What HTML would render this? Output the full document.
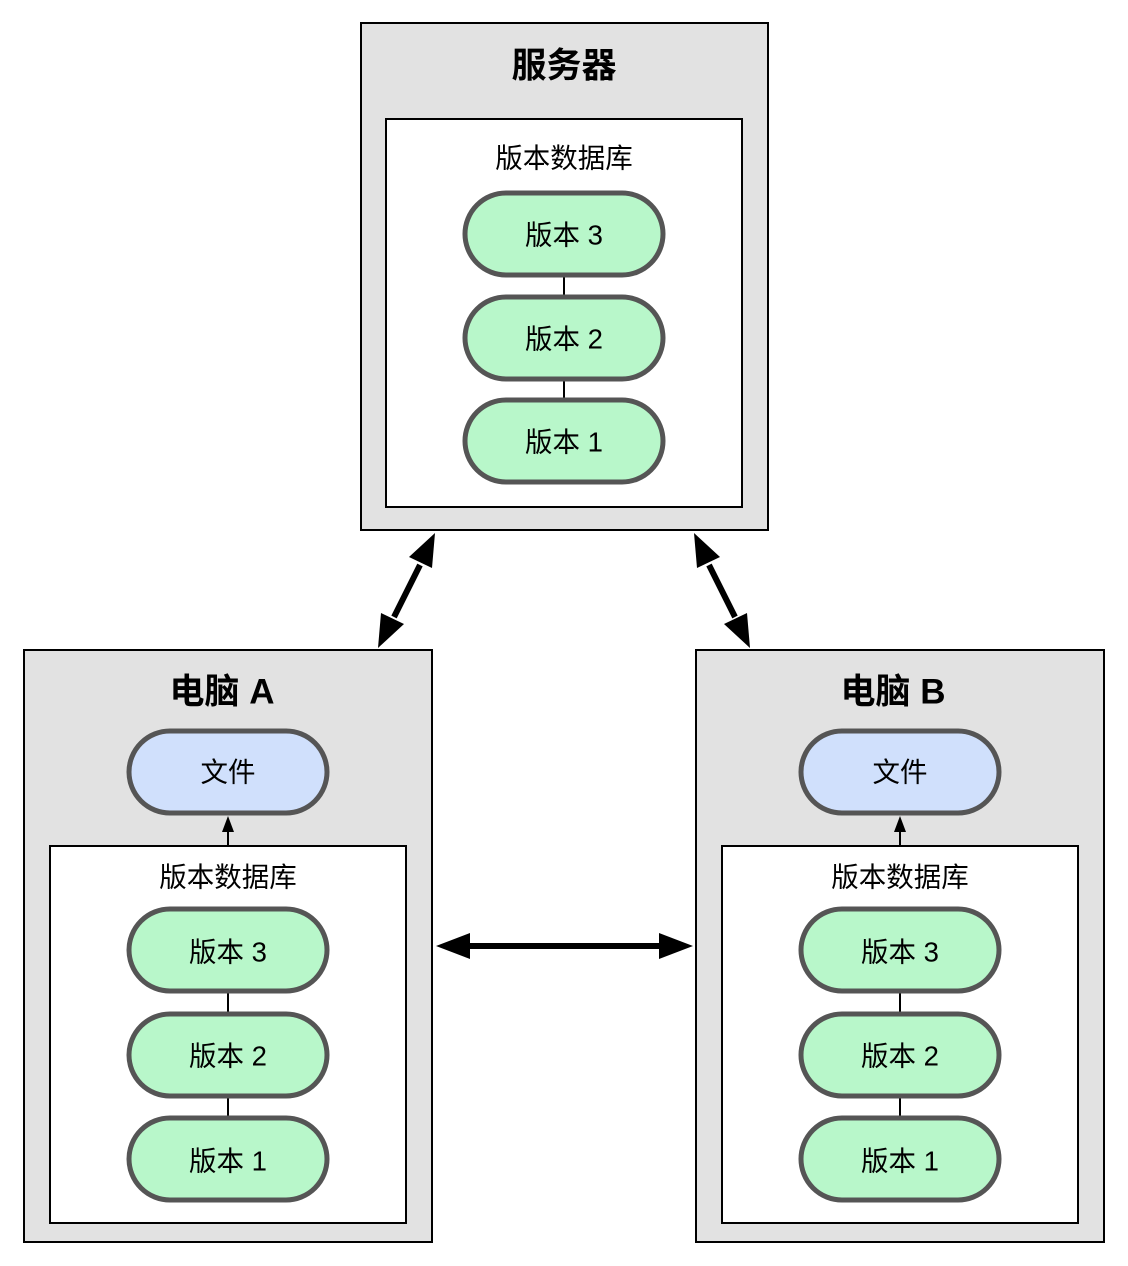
<!DOCTYPE html>
<html><head><meta charset="utf-8"><style>
html,body{margin:0;padding:0;background:#fff;}
svg{display:block;}
text{font-family:"Liberation Sans","Noto Sans CJK SC",sans-serif;fill:#000;text-anchor:middle;dominant-baseline:central;}
.t{font-size:35px;font-weight:bold;}
.s{font-size:27.5px;}
.box{fill:#e2e2e2;stroke:#000;stroke-width:2;}
.in{fill:#fff;stroke:#000;stroke-width:2;}
.g{fill:#b8f7ca;stroke:#555;stroke-width:5;}
.b{fill:#d0e0fc;stroke:#555;stroke-width:5;}
.ln{stroke:#000;stroke-width:2;}
.ar{stroke:#000;stroke-width:6;}
</style></head><body>
<svg width="1128" height="1266" viewBox="0 0 1128 1266" xmlns="http://www.w3.org/2000/svg">
<rect class="box" x="361" y="23" width="407" height="507"/>
<text class="t" x="564" y="66">服务器</text>
<rect class="in" x="386" y="119" width="356" height="388"/>
<text class="s" x="564" y="158">版本数据库</text>
<line class="ln" x1="564" y1="275" x2="564" y2="297"/>
<line class="ln" x1="564" y1="379" x2="564" y2="400"/>
<rect class="g" x="465" y="193" width="198" height="82" rx="41"/>
<text class="s" x="564" y="235">版本 3</text>
<rect class="g" x="465" y="297" width="198" height="82" rx="41"/>
<text class="s" x="564" y="339">版本 2</text>
<rect class="g" x="465" y="400" width="198" height="82" rx="41"/>
<text class="s" x="564" y="442">版本 1</text>

<rect class="box" x="24" y="650" width="408" height="592"/>
<text class="t" x="222" y="692">电脑 A</text>
<rect class="in" x="50" y="846" width="356" height="377"/>
<rect class="b" x="129" y="731" width="198" height="82" rx="41"/>
<text class="s" x="228" y="772">文件</text>
<line class="ln" x1="228" y1="846" x2="228" y2="830"/>
<polygon points="228,816 222,832 234,832" fill="#000"/>
<text class="s" x="228" y="877">版本数据库</text>
<line class="ln" x1="228" y1="991" x2="228" y2="1014"/>
<line class="ln" x1="228" y1="1096" x2="228" y2="1118"/>
<rect class="g" x="129" y="909" width="198" height="82" rx="41"/>
<text class="s" x="228" y="952">版本 3</text>
<rect class="g" x="129" y="1014" width="198" height="82" rx="41"/>
<text class="s" x="228" y="1056">版本 2</text>
<rect class="g" x="129" y="1118" width="198" height="82" rx="41"/>
<text class="s" x="228" y="1161">版本 1</text>

<rect class="box" x="696" y="650" width="408" height="592"/>
<text class="t" x="893" y="692">电脑 B</text>
<rect class="in" x="722" y="846" width="356" height="377"/>
<rect class="b" x="801" y="731" width="198" height="82" rx="41"/>
<text class="s" x="900" y="772">文件</text>
<line class="ln" x1="900" y1="846" x2="900" y2="830"/>
<polygon points="900,816 894,832 906,832" fill="#000"/>
<text class="s" x="900" y="877">版本数据库</text>
<line class="ln" x1="900" y1="991" x2="900" y2="1014"/>
<line class="ln" x1="900" y1="1096" x2="900" y2="1118"/>
<rect class="g" x="801" y="909" width="198" height="82" rx="41"/>
<text class="s" x="900" y="952">版本 3</text>
<rect class="g" x="801" y="1014" width="198" height="82" rx="41"/>
<text class="s" x="900" y="1056">版本 2</text>
<rect class="g" x="801" y="1118" width="198" height="82" rx="41"/>
<text class="s" x="900" y="1161">版本 1</text>

<line class="ar" x1="470" y1="946" x2="660" y2="946"/>
<polygon points="436,946 470,933 470,959" fill="#000"/>
<polygon points="693,946 659,933 659,959" fill="#000"/>

<line class="ar" x1="420" y1="565" x2="394" y2="617"/>
<polygon points="435,533 432,568 409,557" fill="#000"/>
<polygon points="378,648 381,613 404,624" fill="#000"/>

<line class="ar" x1="709" y1="565" x2="735" y2="617"/>
<polygon points="694,533 697,568 720,557" fill="#000"/>
<polygon points="750,648 747,613 724,624" fill="#000"/>
</svg>
</body></html>
